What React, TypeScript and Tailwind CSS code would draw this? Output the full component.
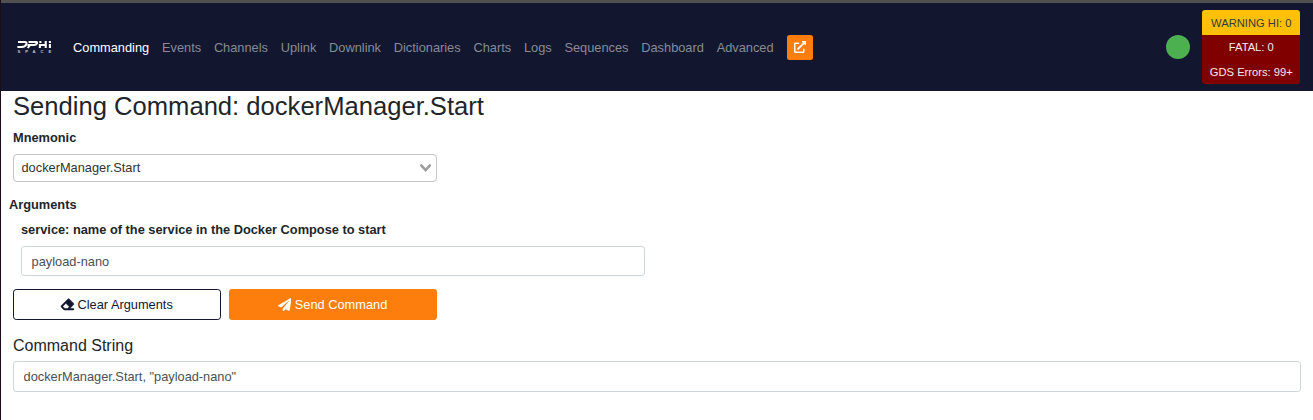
import { FaEraser, FaExternalLinkAlt, FaPaperPlane } from "react-icons/fa";

const links = [
  "Commanding",
  "Events",
  "Channels",
  "Uplink",
  "Downlink",
  "Dictionaries",
  "Charts",
  "Logs",
  "Sequences",
  "Dashboard",
  "Advanced",
];

function Logo() {
  return (
    <svg className="block h-[14px] w-[36px] shrink-0" viewBox="0 0 36 14" role="img" aria-label="DPHI Space">
      <g fill="none" stroke="#fff" strokeWidth="2.1">
        <path d="M2 2H8.6Q11 2 10.4 4Q9.4 7 5.6 7H1.4" />
        <path d="M12.6 2H20Q21.8 2 20.8 3.5Q20 5 18 5H11.4M14 5L11.8 8" />
        <path d="M24.4 1V3M23.6 5H30.4M29.7 1V8M23.9 4V8" />
        <path d="M33.9 1V3M33.9 4V8" />
      </g>
      <text x="1.4" y="13" textLength="34" fill="#c3c5ce" className="font-['Liberation_Sans',sans-serif] text-[4.2px] font-bold">
        SPACE
      </text>
    </svg>
  );
}

function Navbar() {
  return (
    <header className="flex h-[88px] items-center bg-[#12172f] pr-[13px] pl-[15px]">
      <Logo />
      <nav className="ml-[14.7px] flex items-center">
        {links.map((name, i) => (
          <a key={name} href="#" className={i === 0 ? "px-[6.4px] text-white" : "px-[6.4px] text-[#888b97]"}>
            {name}
          </a>
        ))}
        <button className="ml-[6.7px] flex h-[25px] w-[26px] items-center justify-center rounded-[2.5px] bg-[#fd7e0d] pb-px text-white">
          <FaExternalLinkAlt size={12} />
        </button>
      </nav>
      <div className="ml-auto size-6 rounded-full bg-[#4caf50]" />
      <div className="ml-3 flex h-[74px] w-[98px] flex-col overflow-hidden rounded-[3px] text-center text-[11.2px]">
        <div className="h-[25px] bg-[#ffc107] pl-[0.6px] leading-[26px] text-[#343a40]">WARNING HI: 0</div>
        <div className="h-[24px] bg-[#800000] pl-[0.6px] leading-[25px] text-[#f4eaea]">FATAL: 0</div>
        <div className="h-[25px] bg-[#800000] pl-[0.6px] leading-[26px] text-[#f4eaea]">GDS Errors: 99+</div>
      </div>
    </header>
  );
}

export default function App() {
  return (
    <div className="h-[420px] overflow-hidden border-l border-[#1a0c18] bg-white font-['Liberation_Sans',Arial,sans-serif] text-[12.8px] leading-[19px] text-[#212529]">
      <div className="h-[3px] bg-[#505050]" />
      <Navbar />
      <main className="pr-3 pl-3">
        <h2 className="h-[31px] text-[25.6px] leading-[31px]">Sending Command: dockerManager.Start</h2>
        <div className="mt-[6px] font-bold">Mnemonic</div>
        <div className="mt-[7px] flex h-[28px] w-[424px] items-center justify-between rounded-[4px] border border-[#c5c5c5] pr-[5px] pl-[7.5px] text-[#333]">
          <span className="pb-[2px]">dockerManager.Start</span>
          <svg className="h-[8px] w-[11.2px]" viewBox="0 0 14 10" fill="#3c3c3c" fillOpacity="0.5">
            <path d="M9.211364 7.59931l4.48338-4.867229c.407008-.441854.407008-1.158247 0-1.60046l-.73712-.80023c-.407008-.441854-1.066904-.441854-1.474243 0L7 5.198617 2.51662.33139c-.407008-.441853-1.066904-.441853-1.474243 0l-.737121.80023c-.407008.441854-.407008 1.158248 0 1.600461l4.48338 4.867228L7 10l2.211364-2.40069z" />
          </svg>
        </div>
        <div className="-ml-1 mt-[13px] font-bold">Arguments</div>
        <div className="mt-[6px] ml-2 font-bold">service: name of the service in the Docker Compose to start</div>
        <input
          className="mt-[7px] ml-2 block h-[30px] w-[624px] rounded-[3.2px] border border-[#ced4da] px-[9.6px] text-[#495057] outline-none"
          defaultValue="payload-nano"
        />
        <div className="mt-[13px] flex gap-2">
          <button className="flex h-[31px] w-[208px] items-center justify-center gap-[3.5px] rounded-[3.2px] border border-[#12172f] text-[#12172f]">
            <FaEraser size={12.8} className="overflow-visible" stroke="#12172f" strokeWidth={22} />
            Clear Arguments
          </button>
          <button className="flex h-[31px] w-[208px] items-center justify-center gap-[3.5px] rounded-[3.2px] bg-[#fd7e0d] text-white">
            <FaPaperPlane size={13.6} className="-ml-px" />
            Send Command
          </button>
        </div>
        <h5 className="mt-[16px] text-[16px] leading-[19px]">Command String</h5>
        <input
          className="mt-[6px] block h-[31px] w-full rounded-[3.2px] border border-[#ced4da] px-[9.6px] text-[#495057] outline-none"
          defaultValue={'dockerManager.Start, "payload-nano"'}
        />
      </main>
    </div>
  );
}
